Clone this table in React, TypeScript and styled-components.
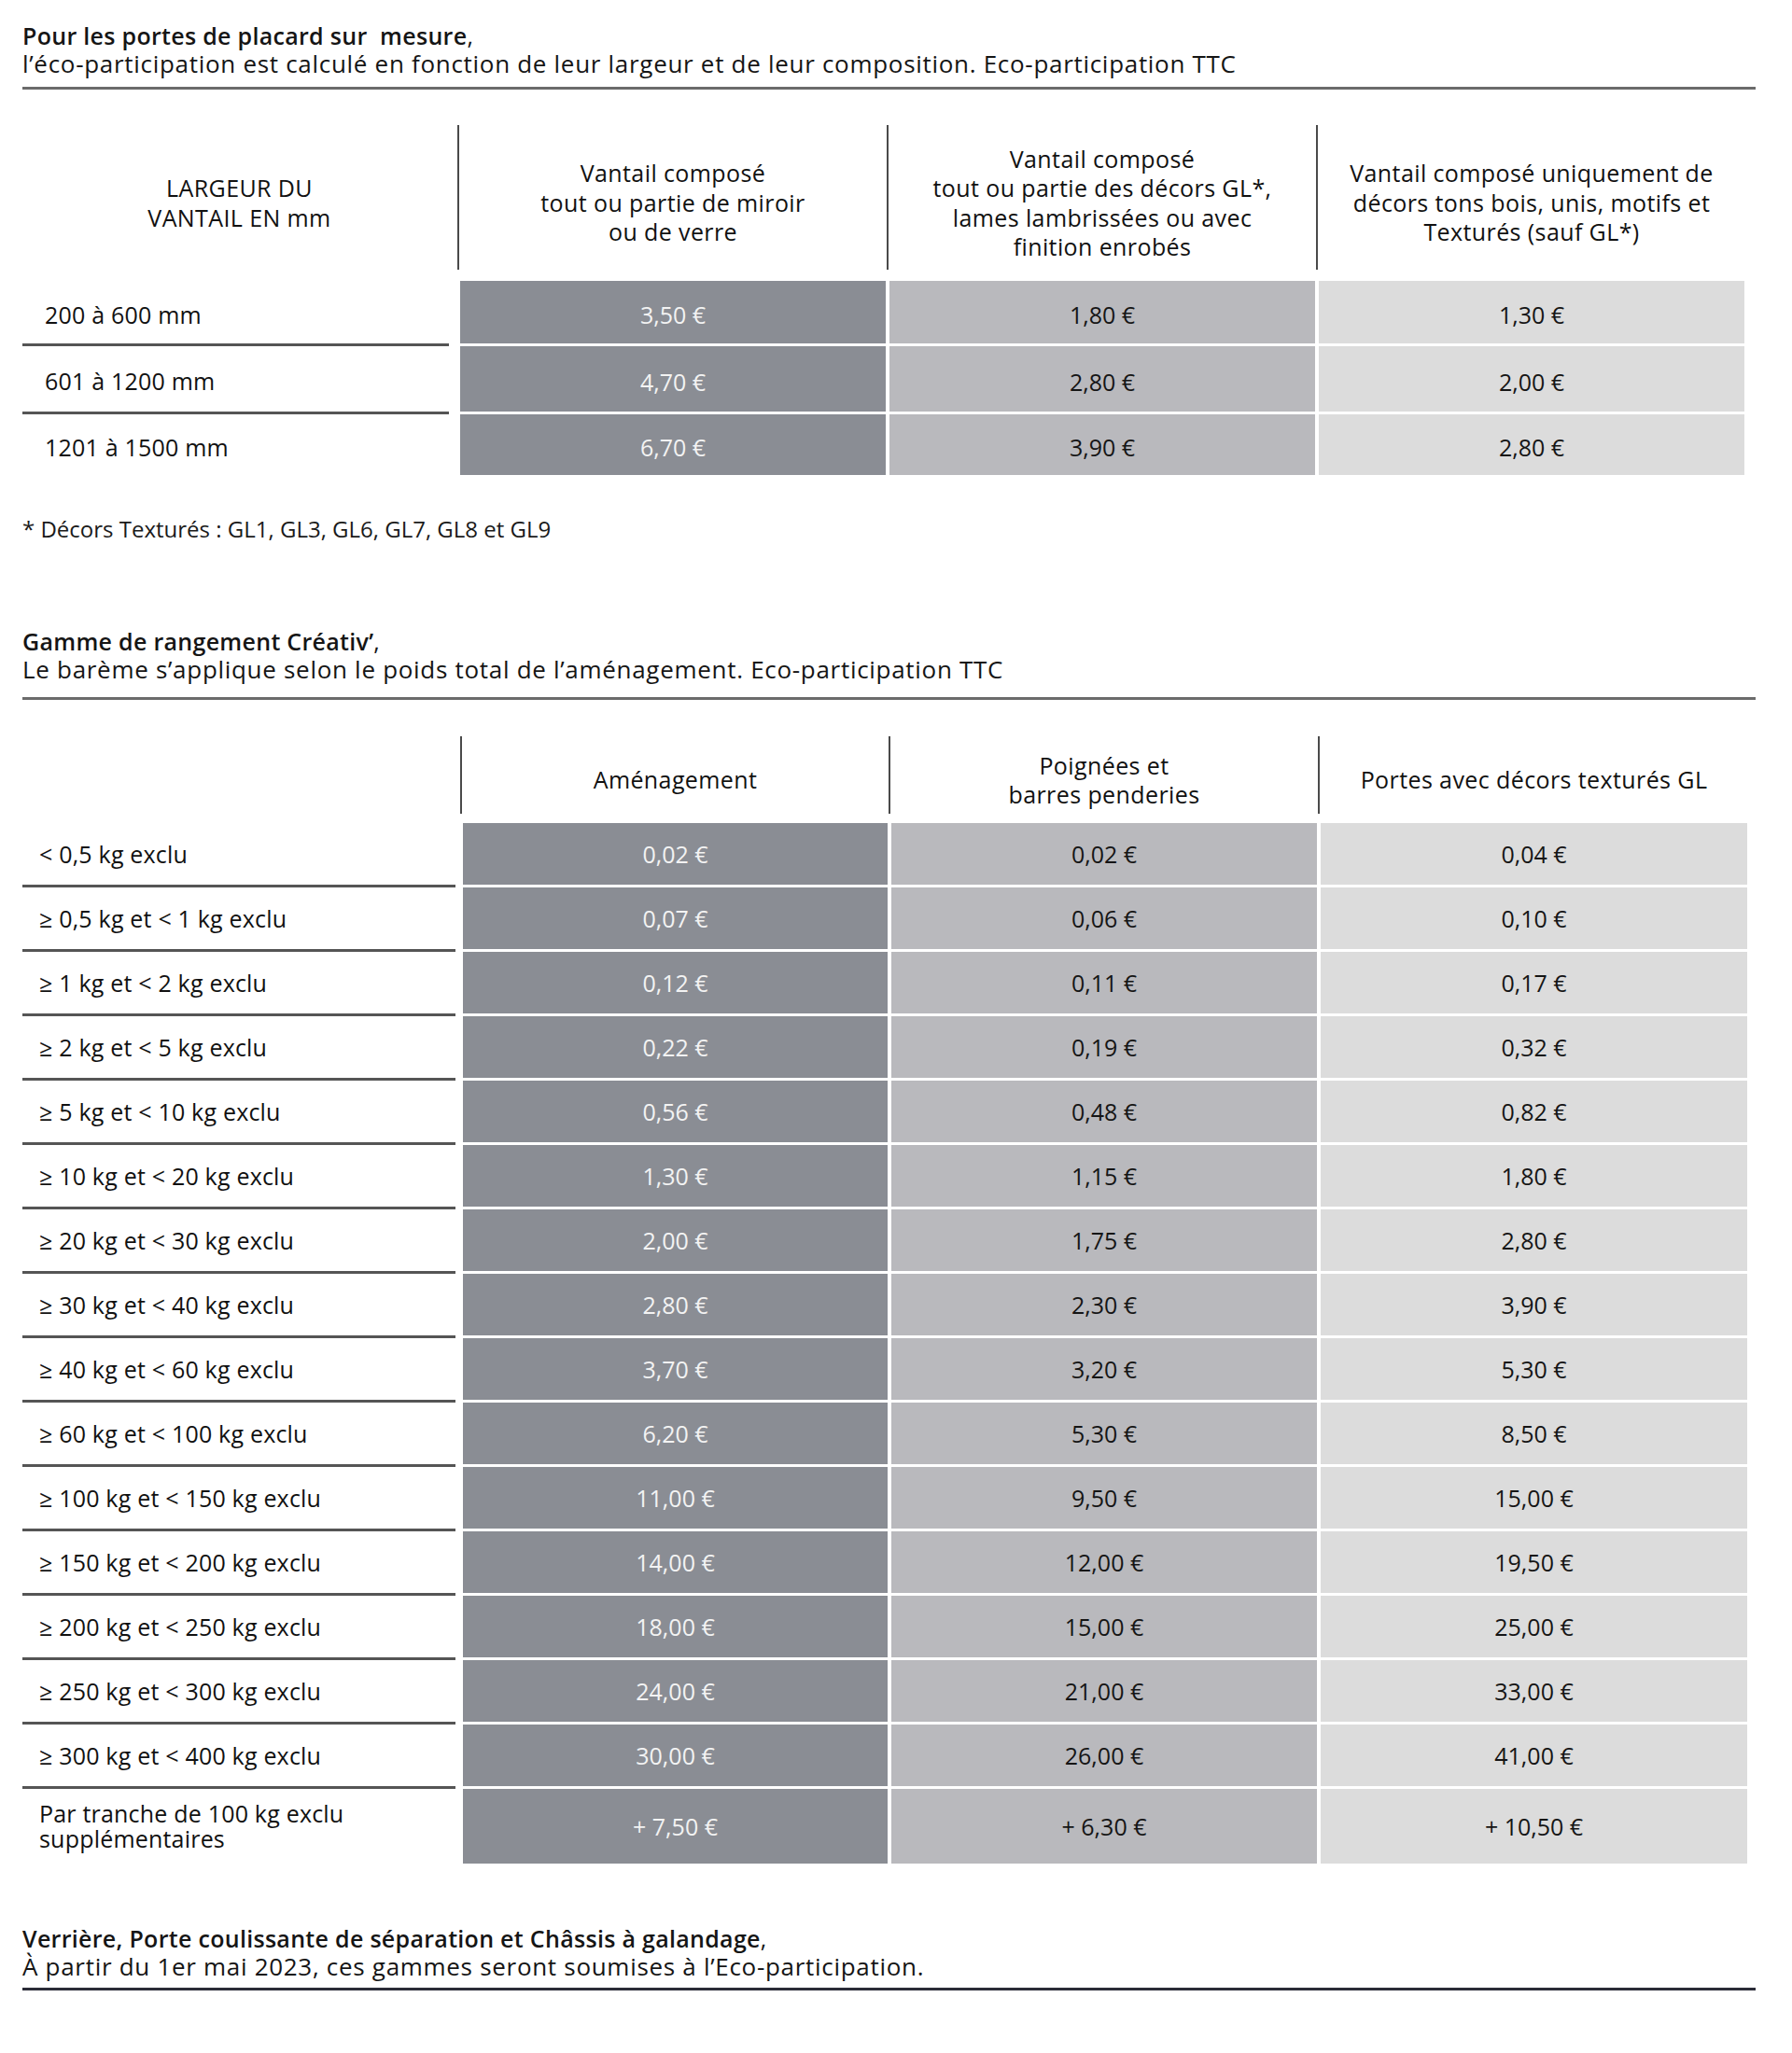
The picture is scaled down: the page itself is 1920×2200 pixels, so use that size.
import React from 'react';
import styled, { createGlobalStyle } from 'styled-components';

const GlobalStyle = createGlobalStyle`
  html, body {
    margin: 0;
    padding: 0;
    background: #ffffff;
  }
  body {
    font-family: "Open Sans", "Liberation Sans", "DejaVu Sans", sans-serif;
    color: #151515;
  }
`;

const Page = styled.div`
  width: 1857px;
  padding: 23px 0 60px 24px;
`;

const Heading = styled.header<{ $gap: number; $rule: string }>`
  padding-bottom: ${p => p.$gap}px;
  border-bottom: 3px solid ${p => p.$rule};
`;

const Title = styled.h2`
  margin: 0;
  font-size: 25px;
  line-height: 30px;
  font-weight: 400;
  letter-spacing: 0.3px;
  white-space: nowrap;

  strong {
    font-weight: 600;
  }
`;

const Subtitle = styled.p`
  margin: 0;
  font-size: 26px;
  line-height: 31px;
  font-weight: 400;
  letter-spacing: 0.7px;
  white-space: nowrap;
`;

const Grid = styled.div<{ $cols: string; $rows: string; $top: number }>`
  display: grid;
  grid-template-columns: ${p => p.$cols};
  grid-template-rows: ${p => p.$rows};
  column-gap: 4px;
  row-gap: 3px;
  margin-top: ${p => p.$top}px;
`;

const HeadCell = styled.div<{ $height: number; $pad: number; $line?: boolean }>`
  position: relative;
  box-sizing: border-box;
  height: ${p => p.$height}px;
  padding-top: ${p => p.$pad}px;
  display: flex;
  align-items: center;
  justify-content: center;
  text-align: center;
  font-size: 25px;
  line-height: 31.5px;
  font-weight: 400;
  letter-spacing: 0.4px;
  color: #111;

  &::before {
    content: '';
    display: ${p => (p.$line ? 'block' : 'none')};
    position: absolute;
    left: -3px;
    top: 0;
    bottom: 0;
    width: 2px;
    background: #4a4a4a;
  }
`;

const Label = styled.div<{ $pad: number; $trim: number; $sep: boolean; $shift?: number }>`
  display: flex;
  align-items: center;
  box-sizing: border-box;
  padding-left: ${p => p.$pad}px;
  padding-top: ${p => p.$shift ?? 0}px;
  margin-right: ${p => p.$trim}px;
  margin-bottom: ${p => (p.$sep ? -3 : 0)}px;
  border-bottom: ${p => (p.$sep ? '3px solid #555' : 'none')};
  font-size: 25px;
  line-height: 27px;
  letter-spacing: 0.2px;
  color: #111;
`;

const tones = {
  dark: { bg: '#8a8d94', fg: '#f3f3f3' },
  mid: { bg: '#b9b9bd', fg: '#151515' },
  light: { bg: '#dcdcdc', fg: '#151515' },
};

type Tone = keyof typeof tones;

const Value = styled.div<{ $tone: Tone; $shift?: number }>`
  display: flex;
  align-items: center;
  justify-content: center;
  box-sizing: border-box;
  padding-top: ${p => p.$shift ?? 0}px;
  background: ${p => tones[p.$tone].bg};
  color: ${p => tones[p.$tone].fg};
  font-size: 25px;
  letter-spacing: 0;
`;

const Row = styled.div`
  display: contents;
`;

const Note = styled.p`
  margin: 43px 0 0;
  font-size: 24px;
  line-height: 30px;
  letter-spacing: 0;
  color: #1a1a1a;
`;

const Section = styled.section<{ $top: number }>`
  margin-top: ${p => p.$top}px;
`;

const toneOrder: Tone[] = ['dark', 'mid', 'light'];

const doorHeads = [
  ['Vantail composé', 'tout ou partie de miroir', 'ou de verre'],
  ['Vantail composé', 'tout ou partie des décors GL*,', 'lames lambrissées ou avec', 'finition enrobés'],
  ['Vantail composé uniquement de', 'décors tons bois, unis, motifs et', 'Texturés (sauf GL*)'],
];

const doorRows = [
  ['200 à 600 mm', '3,50 €', '1,80 €', '1,30 €'],
  ['601 à 1200 mm', '4,70 €', '2,80 €', '2,00 €'],
  ['1201 à 1500 mm', '6,70 €', '3,90 €', '2,80 €'],
];

const rangeHeads = [['Aménagement'], ['Poignées et', 'barres penderies'], ['Portes avec décors texturés GL']];

const rangeRows = [
  ['< 0,5 kg exclu', '0,02 €', '0,02 €', '0,04 €'],
  ['≥ 0,5 kg et < 1 kg exclu', '0,07 €', '0,06 €', '0,10 €'],
  ['≥ 1 kg et < 2 kg exclu', '0,12 €', '0,11 €', '0,17 €'],
  ['≥ 2 kg et < 5 kg exclu', '0,22 €', '0,19 €', '0,32 €'],
  ['≥ 5 kg et < 10 kg exclu', '0,56 €', '0,48 €', '0,82 €'],
  ['≥ 10 kg et < 20 kg exclu', '1,30 €', '1,15 €', '1,80 €'],
  ['≥ 20 kg et < 30 kg exclu', '2,00 €', '1,75 €', '2,80 €'],
  ['≥ 30 kg et < 40 kg exclu', '2,80 €', '2,30 €', '3,90 €'],
  ['≥ 40 kg et < 60 kg exclu', '3,70 €', '3,20 €', '5,30 €'],
  ['≥ 60 kg et < 100 kg exclu', '6,20 €', '5,30 €', '8,50 €'],
  ['≥ 100 kg et < 150 kg exclu', '11,00 €', '9,50 €', '15,00 €'],
  ['≥ 150 kg et < 200 kg exclu', '14,00 €', '12,00 €', '19,50 €'],
  ['≥ 200 kg et < 250 kg exclu', '18,00 €', '15,00 €', '25,00 €'],
  ['≥ 250 kg et < 300 kg exclu', '24,00 €', '21,00 €', '33,00 €'],
  ['≥ 300 kg et < 400 kg exclu', '30,00 €', '26,00 €', '41,00 €'],
];

function Lines({ lines }: { lines: string[] }) {
  return (
    <span>
      {lines.map((l, i) => (
        <React.Fragment key={i}>
          {i > 0 && <br />}
          {l}
        </React.Fragment>
      ))}
    </span>
  );
}

export default function App() {
  return (
    <Page>
      <GlobalStyle />

      <Heading $gap={9} $rule="#6b6b6b">
        <Title><strong>Pour les portes de placard sur{'\u00a0'} mesure</strong>,</Title>
        <Subtitle>
          l’éco-participation est calculé en fonction de leur largeur et de leur composition. Eco-participation TTC
        </Subtitle>
      </Heading>

      <Grid $cols="465px 456px 456px 456px" $rows="164px 67px 70px 65px" $top={38}>
        <HeadCell $height={155} $pad={12}>
          <Lines lines={['LARGEUR DU', 'VANTAIL EN mm']} />
        </HeadCell>
        {doorHeads.map((h, i) => (
          <HeadCell key={i} $height={155} $pad={12} $line>
            <Lines lines={h} />
          </HeadCell>
        ))}
        {doorRows.map((r, ri) => (
          <Row key={ri}>
            <Label $pad={24} $trim={8} $sep={ri < doorRows.length - 1} $shift={5}>{r[0]}</Label>
            {r.slice(1).map((v, ci) => (
              <Value key={ci} $tone={toneOrder[ci]} $shift={5}>{v}</Value>
            ))}
          </Row>
        ))}
      </Grid>

      <Note>* Décors Texturés : GL1, GL3, GL6, GL7, GL8 et GL9</Note>

      <Section $top={90}>
        <Heading $gap={14} $rule="#6b6b6b">
          <Title><strong>Gamme de rangement Créativ’</strong>,</Title>
          <Subtitle>Le barème s’applique selon le poids total de l’aménagement. Eco-participation TTC</Subtitle>
        </Heading>

        <Grid $cols="468px 455px 456px 457px" $rows="90px repeat(15, 66px) 80px" $top={39}>
          <HeadCell $height={83} $pad={11} />
          {rangeHeads.map((h, i) => (
            <HeadCell key={i} $height={83} $pad={11} $line>
              <Lines lines={h} />
            </HeadCell>
          ))}
          {rangeRows.map((r, ri) => (
            <Row key={ri}>
              <Label $pad={18} $trim={4} $sep>{r[0]}</Label>
              {r.slice(1).map((v, ci) => (
                <Value key={ci} $tone={toneOrder[ci]}>{v}</Value>
              ))}
            </Row>
          ))}
          <Label $pad={18} $trim={4} $sep={false}>
            <Lines lines={['Par tranche de 100 kg exclu', 'supplémentaires']} />
          </Label>
          <Value $tone="dark">+ 7,50 €</Value>
          <Value $tone="mid">+ 6,30 €</Value>
          <Value $tone="light">+ 10,50 €</Value>
        </Grid>
      </Section>

      <Section $top={65}>
        <Heading $gap={7} $rule="#2b2c38">
          <Title><strong>Verrière, Porte coulissante de séparation et Châssis à galandage</strong>,</Title>
          <Subtitle>À partir du 1er mai 2023, ces gammes seront soumises à l’Eco-participation.</Subtitle>
        </Heading>
      </Section>
    </Page>
  );
}
